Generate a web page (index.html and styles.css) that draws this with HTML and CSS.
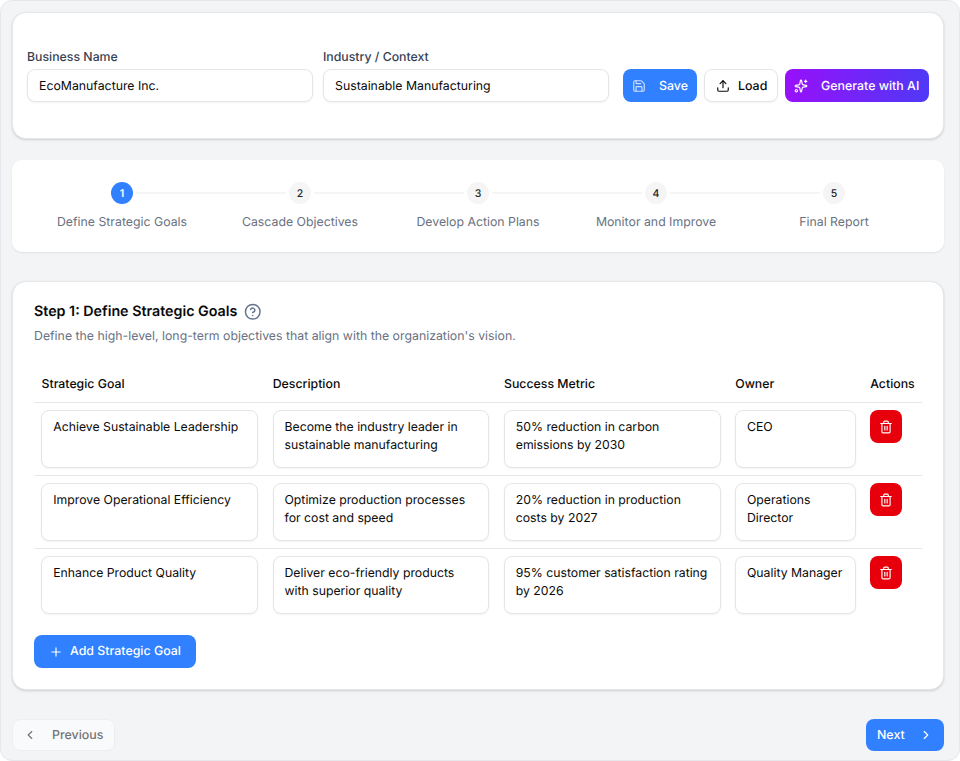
FILE: index.html
```html
<!DOCTYPE html>
<html lang="en">
<head>
<meta charset="utf-8">
<title>Strategic Goals</title>
<link rel="stylesheet" href="styles.css">
</head>
<body>
<div class="app">
  <section class="card top">
    <div class="field">
      <label class="label">Business Name</label>
      <div class="input">EcoManufacture Inc.</div>
    </div>
    <div class="field">
      <label class="label">Industry / Context</label>
      <div class="input">Sustainable Manufacturing</div>
    </div>
    <div class="top-actions">
      <button class="btn primary save">
        <svg class="ico faint" viewBox="0 0 24 24"><path d="M15.2 3a2 2 0 0 1 1.4.6l3.8 3.8a2 2 0 0 1 .6 1.4V19a2 2 0 0 1-2 2H5a2 2 0 0 1-2-2V5a2 2 0 0 1 2-2z"/><path d="M17 21v-7a1 1 0 0 0-1-1H8a1 1 0 0 0-1 1v7"/><path d="M7 3v4a1 1 0 0 0 1 1h7"/></svg>
        <span>Save</span>
      </button>
      <button class="btn outline load">
        <svg class="ico" viewBox="0 0 24 24"><path d="M21 15v4a2 2 0 0 1-2 2H5a2 2 0 0 1-2-2v-4"/><path d="M17 8l-5-5-5 5"/><path d="M12 3v12"/></svg>
        <span>Load</span>
      </button>
      <button class="btn ai">
        <svg class="ico" viewBox="0 0 24 24"><path d="M11.017 2.814a1 1 0 0 1 1.966 0l1.051 5.558a2 2 0 0 0 1.594 1.594l5.558 1.051a1 1 0 0 1 0 1.966l-5.558 1.051a2 2 0 0 0-1.594 1.594l-1.051 5.558a1 1 0 0 1-1.966 0l-1.051-5.558a2 2 0 0 0-1.594-1.594l-5.558-1.051a1 1 0 0 1 0-1.966l5.558-1.051a2 2 0 0 0 1.594-1.594z"/><path d="M20 2v4"/><path d="M22 4h-4"/><circle cx="4" cy="20" r="2"/></svg>
        <span>Generate with AI</span>
      </button>
    </div>
  </section>

  <nav class="stepper">
    <div class="step active"><span class="dot">1</span><span class="step-name">Define Strategic Goals</span></div>
    <div class="step"><span class="dot">2</span><span class="step-name">Cascade Objectives</span></div>
    <div class="step"><span class="dot">3</span><span class="step-name">Develop Action Plans</span></div>
    <div class="step"><span class="dot">4</span><span class="step-name">Monitor and Improve</span></div>
    <div class="step last"><span class="dot">5</span><span class="step-name">Final Report</span></div>
  </nav>

  <section class="card main">
    <div class="title-row">
      <h2 class="title">Step 1: Define Strategic Goals</h2>
      <svg class="help" viewBox="0 0 24 24"><circle cx="12" cy="12" r="10"/><path d="M9.09 9a3 3 0 0 1 5.83 1c0 2-3 3-3 3"/><path d="M12 17h.01"/></svg>
    </div>
    <p class="subtitle">Define the high-level, long-term objectives that align with the organization's vision.</p>

    <div class="table">
      <div class="row head">
        <div>Strategic Goal</div><div>Description</div><div>Success Metric</div><div>Owner</div><div>Actions</div>
      </div>
      <div class="row">
        <div class="area">Achieve Sustainable Leadership</div>
        <div class="area">Become the industry leader in sustainable manufacturing</div>
        <div class="area">50% reduction in carbon emissions by 2030</div>
        <div class="area">CEO</div>
        <button class="del"><svg class="ico" viewBox="0 0 24 24"><path d="M3 6h18"/><path d="M19 6v14a2 2 0 0 1-2 2H7a2 2 0 0 1-2-2V6"/><path d="M8 6V4a2 2 0 0 1 2-2h4a2 2 0 0 1 2 2v2"/><path d="M10 11v6"/><path d="M14 11v6"/></svg></button>
      </div>
      <div class="row">
        <div class="area">Improve Operational Efficiency</div>
        <div class="area">Optimize production processes for cost and speed</div>
        <div class="area">20% reduction in production costs by 2027</div>
        <div class="area">Operations Director</div>
        <button class="del"><svg class="ico" viewBox="0 0 24 24"><path d="M3 6h18"/><path d="M19 6v14a2 2 0 0 1-2 2H7a2 2 0 0 1-2-2V6"/><path d="M8 6V4a2 2 0 0 1 2-2h4a2 2 0 0 1 2 2v2"/><path d="M10 11v6"/><path d="M14 11v6"/></svg></button>
      </div>
      <div class="row end">
        <div class="area">Enhance Product Quality</div>
        <div class="area">Deliver eco-friendly products with superior quality</div>
        <div class="area">95% customer satisfaction rating by 2026</div>
        <div class="area">Quality Manager</div>
        <button class="del"><svg class="ico" viewBox="0 0 24 24"><path d="M3 6h18"/><path d="M19 6v14a2 2 0 0 1-2 2H7a2 2 0 0 1-2-2V6"/><path d="M8 6V4a2 2 0 0 1 2-2h4a2 2 0 0 1 2 2v2"/><path d="M10 11v6"/><path d="M14 11v6"/></svg></button>
      </div>
    </div>

    <button class="btn primary add">
      <svg class="ico" viewBox="0 0 24 24"><path d="M5 12h14"/><path d="M12 5v14"/></svg>
      <span>Add Strategic Goal</span>
    </button>
  </section>

  <footer class="footer">
    <button class="btn prev">
      <svg class="ico" viewBox="0 0 24 24"><path d="M15 18l-6-6 6-6"/></svg>
      <span>Previous</span>
    </button>
    <button class="btn primary next">
      <span>Next</span>
      <svg class="ico" viewBox="0 0 24 24"><path d="M9 18l6-6-6-6"/></svg>
    </button>
  </footer>
</div>
</body>
</html>
```

FILE: styles.css
```css
* { box-sizing: border-box; }
html, body { margin: 0; height: 100%; background: #fff; }
body { font-family: Inter, "Liberation Sans", sans-serif; font-size: 12.3px; color: #0a0a0a; text-rendering: geometricPrecision; }
.app {
  width: 960px; height: 761px; padding: 11px 15px 9px 11px;
  background: #f3f4f6; border: 1px solid #e5e7eb; border-radius: 12px;
  display: flex; flex-direction: column; overflow: hidden;
}
.card {
  background: #fff; border-radius: 14px; border: 1px solid #e5e7eb;
  box-shadow: 0 1px 3px rgba(0,0,0,.1), 0 1px 2px rgba(0,0,0,.06);
}
.top {
  height: 127px; margin: 0; padding: 0 14px; display: flex; align-items: flex-end; gap: 10px;
  padding-bottom: 36px;
}
.field { width: 286px; display: flex; flex-direction: column; gap: 2px; }
.label { font-weight: 500; color: #364153; line-height: 20px; height: 20px; }
.input {
  height: 33px; border: 1px solid #e5e5e5; border-radius: 8px; padding: 0 11px;
  line-height: 31px; box-shadow: 0 1px 2px rgba(0,0,0,.05); background: #fff;
}
.top-actions { display: flex; gap: 7px; align-items: center; margin-left: 4px; }
.btn {
  font: 500 12.4px Inter, "Liberation Sans", sans-serif; height: 33px; border-radius: 8px; border: 0;
  display: inline-flex; align-items: center; padding: 0; white-space: nowrap; text-rendering: geometricPrecision;
}
.ico { width: 14px; height: 14px; fill: none; stroke: currentColor; stroke-width: 2; stroke-linecap: round; stroke-linejoin: round; flex: none; }
.faint { opacity: .75; }
.primary { background: #3080ff; color: #fff; }
.save { width: 74px; padding-left: 9px; gap: 13px; }
.outline { background: #fff; color: #0a0a0a; border: 1px solid #e5e5e5; box-shadow: 0 1px 2px rgba(0,0,0,.05); }
.load { width: 74px; padding-left: 11px; gap: 8px; }
.ai { width: 144px; padding-left: 9px; gap: 13px; color: #fff; background: linear-gradient(to right, #9810fa, #4f39f6); }
.stepper {
  margin-top: 21px; height: 92px; background: #fff; border-radius: 10px;
  box-shadow: 0 1px 2px rgba(0,0,0,.08);
  display: flex; padding: 22px 21px 0;
}
.step { width: 178px; flex: none; display: flex; flex-direction: column; align-items: center; gap: 9px; position: relative; }
.step::after {
  content: ""; position: absolute; top: 10px; left: calc(50% + 14px); width: 150px; height: 2px; background: #f5f5f5;
}
.step.last::after { display: none; }
.dot {
  width: 22px; height: 22px; border-radius: 50%; background: #f5f5f5; color: #262626; font-size: 10.5px; font-weight: 500;
  display: flex; align-items: center; justify-content: center;
}
.active .dot { background: #3080ff; color: #fff; font-weight: 600; }
.step-name { line-height: 18px; color: #6a7282; white-space: nowrap; }
.main { margin-top: 29px; height: 409px; padding: 0 21px; }
.title-row { display: flex; align-items: center; gap: 7px; margin-top: 20px; height: 20px; }
.title { margin: 0; font-size: 14.27px; font-weight: 600; line-height: 20px; color: #0a0a0a; }
.help { width: 17.5px; height: 17.5px; fill: none; stroke: #62748e; stroke-width: 2; stroke-linecap: round; stroke-linejoin: round; }
.subtitle { margin: 5px 0 0; font-size: 12.32px; line-height: 18px; color: #6a7282; }
.table { margin-top: 19px; width: 888px; }
.row {
  display: grid; grid-template-columns: 231.25px 231.25px 231.25px 135px 59.25px; height: 73px; padding-top: 7px;
  border-bottom: 1px solid #e5e7eb; align-items: start;
}
.row.end { border-bottom: 0; }
.row.head { height: 39px; padding-top: 0; font-weight: 500; line-height: 19px; align-items: center; }
.row.head > div { padding-left: 7.5px; }
.area {
  margin-left: 7.25px; margin-right: 7.25px; height: 58px; border: 1px solid #e5e5e5; border-radius: 8px;
  padding: 7px 11px; font-size: 12.25px; line-height: 18px; box-shadow: 0 1px 2px rgba(0,0,0,.05); background: #fff;
}
.del {
  width: 32px; height: 33px; margin-left: 7.25px; border: 0; border-radius: 8px; background: #e7000b; color: #fff;
  display: flex; align-items: center; justify-content: center; padding: 0;
}
.add { margin-top: 13px; width: 162px; padding: 0 0 2px 15px; gap: 7px; display: flex; }
.add .ico { margin-top: 2px; }
.footer { margin-top: 29px; display: flex; justify-content: space-between; align-items: center; }
.prev {
  width: 103px; height: 32px; background: #f9fafb; color: #737373; border: 1px solid #eceef1; padding: 0 0 1px 10px; gap: 15px;
}
.next { width: 78px; height: 32px; padding: 0 0 1px 11px; gap: 14.5px; }
.prev .ico, .next .ico { margin-top: 1px; }
```
